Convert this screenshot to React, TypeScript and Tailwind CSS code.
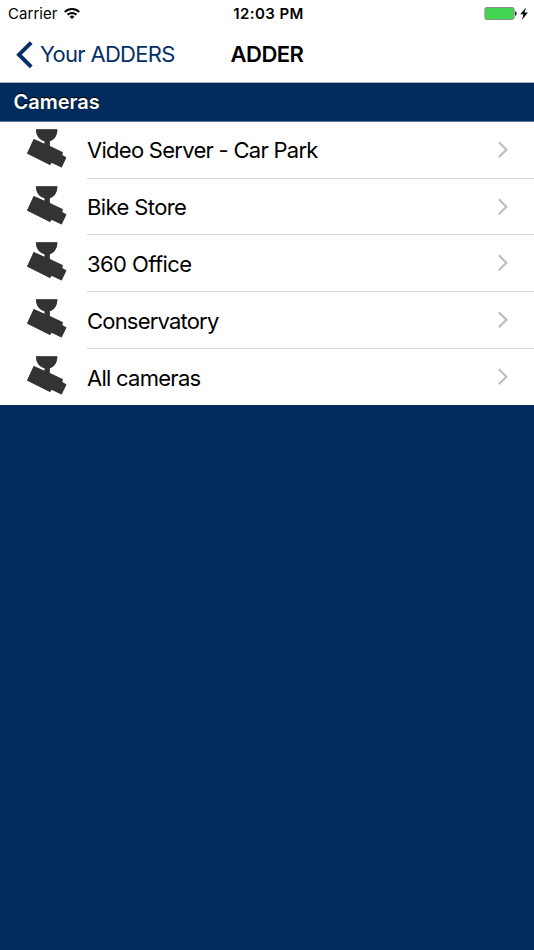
const cameras = [
  { id: 1, name: "Video Server - Car Park", style: "pt-px tracking-[-0.72px]" },
  { id: 2, name: "Bike Store", style: "pt-px tracking-[-0.6px]" },
  { id: 3, name: "360 Office", style: "pt-px tracking-[-0.58px]" },
  { id: 4, name: "Conservatory", style: "pt-0.5 tracking-[-0.8px]" },
  { id: 5, name: "All cameras", style: "pt-0.5 tracking-[-0.74px]" },
];

function WifiIcon() {
  return (
    <svg className="ml-1.5 h-3 w-4" viewBox="0 0 16 12" fill="none" stroke="#000" strokeWidth="2">
      <path d="M0.8 4.1A10.2 10.2 0 0 1 15.2 4.1" />
      <path d="M3.5 6.8A6.4 6.4 0 0 1 12.5 6.8" />
      <path d="M8 11.1L5.6 8.7A3.4 3.4 0 0 1 10.4 8.7Z" fill="#000" stroke="none" />
    </svg>
  );
}

function BatteryIcon() {
  return (
    <svg className="h-4 w-[46px]" viewBox="0 0 46 16">
      <rect x="0.9" y="1.5" width="29.2" height="12" rx="1.8" fill="#43d551" stroke="#8d8d8d" strokeWidth="1" />
      <path d="M31 5.6h0.6q0.9 0 0.9 0.9v2.2q0 0.9-0.9 0.9H31z" fill="#222" />
      <path d="M42 1.4L36.2 8.3h3.3l-1.6 5.6 6-7.4h-3.4z" fill="#000" />
    </svg>
  );
}

function CameraIcon() {
  return (
    <svg
      className="h-[42px] w-[42px] drop-shadow-[0_0.5px_0.7px_rgba(0,0,0,0.45)]"
      viewBox="26 128 42 42"
      fill="#333"
    >
      <path d="M36 129.2H57.3C57.5 135 54.8 139.4 49.8 141.2V146L62.9 152.3L62.2 155.1L66.4 157.4L61.6 167.4L51.7 162.8L50 165L27 153.4L33.7 138.9L43.8 143.5L44.6 143.8V141.2C38.8 139.4 35.8 135 36 129.2Z" />
    </svg>
  );
}

function StatusBar() {
  return (
    <div className="grid h-7 grid-cols-3 items-center text-[15px] leading-none">
      <div className="flex items-center pl-2">
        <span className="pb-px tracking-[0.05px]">Carrier</span>
        <WifiIcon />
      </div>
      <div className="pb-px pl-[3px] text-center font-semibold tracking-[0.4px] whitespace-nowrap">12:03 PM</div>
      <div className="flex justify-end pr-1">
        <BatteryIcon />
      </div>
    </div>
  );
}

function NavBar() {
  return (
    <div className="grid h-[55px] grid-cols-[1fr_auto_1fr] items-center border-b border-[#b2b8c0] text-[22px] leading-none">
      <button className="flex items-center pl-4 text-[#052f66]" type="button">
        <svg className="h-7 w-[18px]" viewBox="0 0 18 28" fill="none" stroke="currentColor" strokeWidth="4">
          <path d="M15.2 1.6L3 13.7L15.2 25.8" />
        </svg>
        <span className="ml-1.5 pb-0.5 tracking-[-0.7px] whitespace-nowrap">Your ADDERS</span>
      </button>
      <h1 className="pb-0.5 font-semibold tracking-[-0.5px]">ADDER</h1>
    </div>
  );
}

export default function App() {
  return (
    <div className="flex h-[950px] w-[534px] flex-col overflow-hidden bg-[#022c5d] font-[Inter,sans-serif] text-black">
      <header className="bg-white">
        <StatusBar />
        <NavBar />
      </header>

      <h2 className="flex h-[39px] shrink-0 items-center border-b border-[#526e91] pl-[13.5px] text-[20px] leading-none font-semibold text-white [text-shadow:0_-1px_1px_#000]">
        Cameras
      </h2>

      <ul className="shrink-0 bg-white">
        {cameras.map((camera) => (
          <li className="group flex h-[56.7px] items-stretch" key={camera.id}>
            <div className="w-[87px] pt-[6px] pl-[26px]">
              <CameraIcon />
            </div>
            <div className="flex flex-1 items-center justify-between border-b border-[#d9d9dc] pr-[25px] group-last:border-transparent">
              <span className={`text-[22px] leading-none ${camera.style}`}>{camera.name}</span>
              <svg className="h-[18px] w-3" viewBox="0 0 12 18" fill="none" stroke="#bdbdc2" strokeWidth="2.2">
                <path d="M1.8 1.2L9.4 8.7L1.8 16.2" />
              </svg>
            </div>
          </li>
        ))}
      </ul>
    </div>
  );
}
